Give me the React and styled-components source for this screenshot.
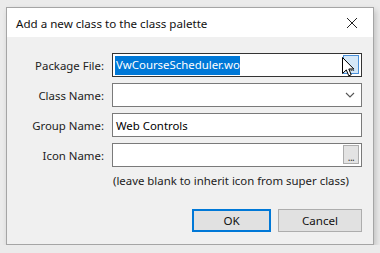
import React from "react"
import styled, { createGlobalStyle } from "styled-components"

const GlobalStyle = createGlobalStyle`
  html, body {
    margin: 0;
    padding: 0;
    background: #ebebeb;
    font-family: "Noto Sans", "Open Sans", sans-serif;
  }
`

const Dialog = styled.div`
  position: relative;
  margin: 7px 0 0 6px;
  width: 366px;
  height: 236px;
  border: 1px solid #a5a5a5;
  background: #f0f0f0;
  box-shadow: 2px 3px 6px rgba(0, 0, 0, 0.18);
  display: flex;
  flex-direction: column;
`

const TitleBar = styled.div`
  height: 29px;
  background: #ffffff;
  display: flex;
  align-items: center;
  justify-content: space-between;
  padding: 0 6px 0 9px;
`

const Title = styled.span`
  font-size: 11.6px;
  color: #111;
  padding-top: 2px;
`

const CloseButton = styled.div`
  width: 26px;
  height: 26px;
  display: flex;
  align-items: center;
  justify-content: center;
  margin-right: 2px;
`

const Form = styled.div`
  display: grid;
  grid-template-columns: 97px 250px;
  column-gap: 8px;
  row-gap: 6px;
  padding: 16px 0 0 0;
  align-items: center;
`

const Label = styled.label`
  font-size: 11.4px;
  color: #222;
  text-align: right;
  white-space: nowrap;
`

const Field = styled.div`
  position: relative;
  height: 24px;
  box-sizing: border-box;
  background: #fff;
  border: 1px solid ${(p) => (p.$focused ? "#333" : "#7a7a7a")};
  display: flex;
  align-items: center;
  padding: 0 2px;
  font-size: 11.4px;
  color: #000;
`

const Selected = styled.span`
  background: #0078d7;
  color: #fff;
  padding: 1px 0 2px 1px;
  line-height: 16px;
`

const Plain = styled.span`
  padding-left: 1px;
`

const Browse = styled.div`
  position: absolute;
  right: 2px;
  top: 1px;
  width: 16px;
  height: 19px;
  box-sizing: border-box;
  border: 1px solid ${(p) => (p.$hover ? "#4a90d9" : "#adadad")};
  background: ${(p) => (p.$hover ? "#d5e8f8" : "#e3e3e3")};
  display: flex;
  align-items: flex-end;
  justify-content: center;
  font-size: 10px;
  line-height: 12px;
  color: #333;
  letter-spacing: -0.5px;
`

const Chevron = styled.svg`
  position: absolute;
  right: 6px;
  top: 8px;
`

const Hint = styled.div`
  grid-column: 2;
  font-size: 11.4px;
  color: #222;
  padding-left: 1px;
`

const Footer = styled.div`
  display: flex;
  justify-content: flex-end;
  gap: 7px;
  padding: 21px 11px 0 0;
`

const Button = styled.div`
  box-sizing: border-box;
  width: ${(p) => p.$w}px;
  height: 23px;
  background: #e1e1e1;
  border: ${(p) => (p.$default ? "2px solid #0078d7" : "1px solid #adadad")};
  display: flex;
  align-items: center;
  justify-content: center;
  font-size: 11.6px;
  color: #111;
`

const Cursor = styled.svg`
  position: absolute;
  left: 335px;
  top: 49px;
`

const App = () => {
  return (
    <>
      <GlobalStyle />
      <Dialog>
        <TitleBar>
          <Title>Add a new class to the class palette</Title>
          <CloseButton>
            <svg width="12" height="12" viewBox="0 0 12 12">
              <path d="M1 1L11 11M11 1L1 11" stroke="#222" strokeWidth="1" />
            </svg>
          </CloseButton>
        </TitleBar>
        <Form>
          <Label>Package File:</Label>
          <Field $focused>
            <Selected>VwCourseScheduler.wo</Selected>
            <Browse $hover>...</Browse>
          </Field>
          <Label>Class Name:</Label>
          <Field>
            <Chevron width="10" height="6" viewBox="0 0 10 6">
              <path d="M1 1L5 5L9 1" fill="none" stroke="#555" strokeWidth="1.1" />
            </Chevron>
          </Field>
          <Label>Group Name:</Label>
          <Field>
            <Plain>Web Controls</Plain>
          </Field>
          <Label>Icon Name:</Label>
          <Field>
            <Browse>...</Browse>
          </Field>
          <Hint>(leave blank to inherit icon from super class)</Hint>
        </Form>
        <Footer>
          <Button $default $w={79}>OK</Button>
          <Button $w={84}>Cancel</Button>
        </Footer>
        <Cursor width="13" height="21" viewBox="0 0 13 21">
          <path
            d="M0.5 0.5L0.5 16.5L4.3 12.9L6.8 18.8L9.2 17.8L6.8 12L11.8 12Z"
            fill="#fff"
            stroke="#000"
            strokeWidth="1"
            strokeLinejoin="round"
          />
        </Cursor>
      </Dialog>
    </>
  )
}

export default App
